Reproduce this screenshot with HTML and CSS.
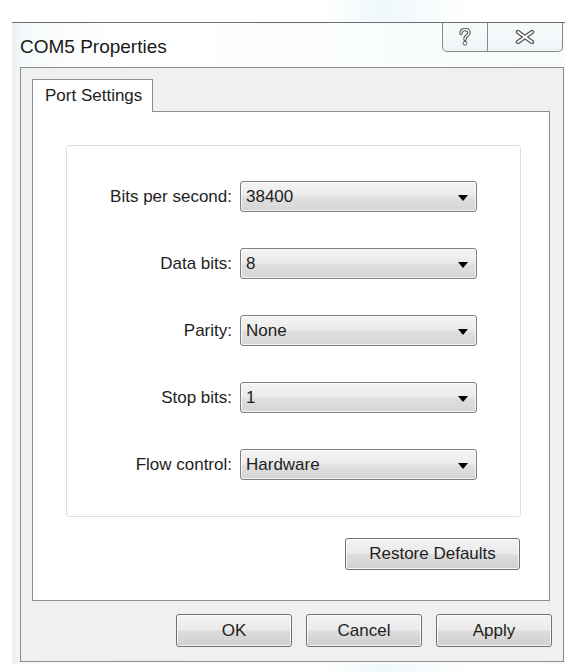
FILE: index.html
```html
<!DOCTYPE html>
<html>
<head>
<meta charset="utf-8">
<title>COM5 Properties</title>
<link rel="stylesheet" href="styles.css">
</head>
<body>
<div class="window">
  <div class="titlebar">
    <span class="title">COM5 Properties</span>
    <div class="caption-buttons">
      <div class="cap-btn cap-help">
        <svg width="14" height="18" viewBox="0 0 14 18">
          <path d="M3 5.5 C3 2.5 5 1.5 7 1.5 C9.5 1.5 11 3 11 5 C11 7 9 7.8 7.5 9 C7 9.5 7 10 7 11.5" fill="none" stroke="#555" stroke-width="3.4" stroke-linecap="round"/>
          <path d="M3 5.5 C3 2.5 5 1.5 7 1.5 C9.5 1.5 11 3 11 5 C11 7 9 7.8 7.5 9 C7 9.5 7 10 7 11.5" fill="none" stroke="#fff" stroke-width="1.3" stroke-linecap="round"/>
          <circle cx="7" cy="15.3" r="1.9" fill="#fff" stroke="#555" stroke-width="1"/>
        </svg>
      </div>
      <div class="cap-btn cap-close">
        <svg width="20" height="14" viewBox="0 0 20 14">
          <path d="M3 2 L17 12 M17 2 L3 12" fill="none" stroke="#555" stroke-width="4.4" stroke-linecap="round"/>
          <path d="M3 2 L17 12 M17 2 L3 12" fill="none" stroke="#fff" stroke-width="2" stroke-linecap="round"/>
        </svg>
      </div>
    </div>
  </div>
  <div class="client">
    <div class="tabs">
      <div class="tab">Port Settings</div>
    </div>
    <div class="page">
      <div class="group">
        <div class="form">
          <label class="lbl">Bits per second:</label>
          <div class="combo"><span>38400</span><i class="arrow"></i></div>
          <label class="lbl">Data bits:</label>
          <div class="combo"><span>8</span><i class="arrow"></i></div>
          <label class="lbl">Parity:</label>
          <div class="combo"><span>None</span><i class="arrow"></i></div>
          <label class="lbl">Stop bits:</label>
          <div class="combo"><span>1</span><i class="arrow"></i></div>
          <label class="lbl">Flow control:</label>
          <div class="combo"><span>Hardware</span><i class="arrow"></i></div>
        </div>
      </div>
      <div class="restore-row">
        <button class="btn btn-restore">Restore Defaults</button>
      </div>
    </div>
    <div class="footer">
      <button class="btn btn-dlg">OK</button>
      <button class="btn btn-dlg">Cancel</button>
      <button class="btn btn-dlg">Apply</button>
    </div>
  </div>
</div>
</body>
</html>
```
FILE: styles.css
```css
* { box-sizing: border-box; }
html, body {
  margin: 0;
  padding: 0;
  background: #ffffff;
  font-family: "Liberation Sans", Arial, sans-serif;
  color: #1e1e1e;
}
body {
  width: 588px;
  height: 672px;
  overflow: hidden;
  background: linear-gradient(90deg, #ffffff 0%, #ffffff 55%, #eef8fb 65%, #ffffff 80%);
}
.window {
  margin: 22px 0 0 12px;
  width: 553px;
  border-top: 1px solid #6e6e6e;
  background: linear-gradient(90deg, #eaf2f6 0%, #f7fafb 3%, #ffffff 20%, #f6fbfc 100%);
  padding-bottom: 2px;
}
.titlebar {
  height: 44px;
  display: flex;
  align-items: flex-start;
  justify-content: space-between;
  padding-left: 8px;
}
.title {
  font-size: 19px;
  line-height: 19px;
  margin-top: 14px;
  color: #1a1a1a;
}
.caption-buttons {
  display: flex;
  height: 29px;
  margin-right: 2px;
  border: 1px solid #8a8a8a;
  border-top: none;
  border-radius: 0 0 5px 5px;
  background: linear-gradient(180deg, #f8fbfc, #eef4f6);
}
.cap-btn {
  display: flex;
  align-items: center;
  justify-content: center;
}
.cap-help {
  width: 45px;
  border-right: 1px solid #8a8a8a;
}
.cap-close {
  width: 74px;
}
.client {
  margin-left: 8px;
  width: 544px;
  height: 595px;
  border: 1px solid #8c8c8c;
  background: #f0f0f0;
  padding: 11px 11px 0 11px;
  display: flex;
  flex-direction: column;
}
.tabs {
  display: flex;
  height: 32px;
  position: relative;
  z-index: 1;
}
.tab {
  width: 121px;
  height: 33px;
  background: #ffffff;
  border: 1px solid #8c8e94;
  border-bottom: none;
  font-size: 17px;
  padding-left: 12px;
  display: flex;
  align-items: center;
  padding-bottom: 1px;
}
.page {
  width: 518px;
  height: 490px;
  background: #ffffff;
  border: 1px solid #8c8e94;
  padding: 33px 28px 0 33px;
}
.group {
  height: 372px;
  border: 1px solid #dedede;
  border-radius: 3px;
  padding-top: 35px;
}
.form {
  display: grid;
  grid-template-columns: 165px 237px;
  column-gap: 8px;
  row-gap: 36px;
  grid-auto-rows: 31px;
}
.lbl {
  font-size: 17px;
  text-align: right;
  align-self: center;
  color: #1e1e1e;
}
.combo {
  height: 31px;
  border: 1px solid #7e7e7e;
  border-radius: 3px;
  background: linear-gradient(180deg, #f4f4f4 0%, #ececec 45%, #dfdfdf 55%, #d6d6d6 100%);
  display: flex;
  align-items: center;
  justify-content: space-between;
  padding: 0 8px 0 5px;
  font-size: 17px;
  color: #1e1e1e;
  box-shadow: inset 0 0 0 1px rgba(255,255,255,0.7);
}
.arrow {
  width: 0;
  height: 0;
  border-left: 5px solid transparent;
  border-right: 5px solid transparent;
  border-top: 6px solid #000;
  margin-top: 2px;
}
.restore-row {
  display: flex;
  justify-content: flex-end;
  margin-top: 21px;
  padding-right: 1px;
}
.btn {
  font-family: "Liberation Sans", Arial, sans-serif;
  font-size: 17px;
  color: #1e1e1e;
  border: 1px solid #707070;
  border-radius: 3px;
  background: linear-gradient(180deg, #f3f3f3 0%, #ebebeb 48%, #dddddd 52%, #cfcfcf 100%);
  box-shadow: inset 0 0 0 1px rgba(255,255,255,0.8);
  padding: 0;
  margin: 0;
}
.btn-restore {
  width: 175px;
  height: 32px;
}
.footer {
  display: flex;
  justify-content: flex-end;
  gap: 14px;
  margin-top: 13px;
}
.btn-dlg {
  width: 116px;
  height: 33px;
}
```
